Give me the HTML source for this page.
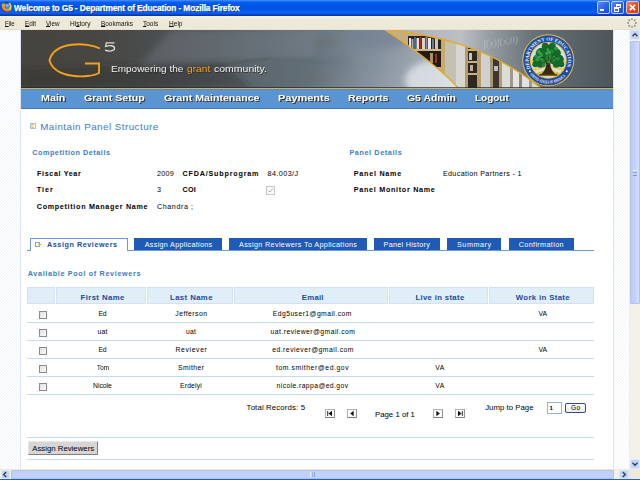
<!DOCTYPE html>
<html><head><meta charset="utf-8">
<style>
html,body{margin:0;padding:0;width:640px;height:480px;overflow:hidden;background:#fff;}
body{position:relative;font-family:"Liberation Sans", sans-serif;}
.a{position:absolute;}
.t{position:absolute;white-space:pre;line-height:1;font-family:"Liberation Sans", sans-serif;}
.t u{text-underline-offset:0px;text-decoration-thickness:1px;}
#title{left:0;top:0;width:640px;height:16px;background:linear-gradient(#4a92fa 0px,#1a6cf2 1.5px,#0058ec 3px,#0054e6 9px,#0a62f2 12px,#0a58e4 14px,#0234b0 15px,#0a3ab8 16px);}
#menu{left:0;top:16px;width:640px;height:14px;background:linear-gradient(#f4f2ea 0px,#ece9d8 4px,#ece9d8 12px,#f0eee4 14px);}
#view{left:0;top:30px;width:629px;height:439px;background-color:#fff;
 background-image:repeating-linear-gradient(-45deg,#fff 0px,#fff 1.2px,#eef3f6 1.5px,#eef3f6 1.8px,#fff 2.12px);}
#page{left:20px;top:30px;width:594px;height:439px;background:#fff;border-left:1px solid #dfe4f6;border-right:1px solid #dfe4f6;box-sizing:border-box;}
#vsb{left:629px;top:30px;width:11px;height:439px;background:#f3f1ea;border-left:1px solid #f0ece0;box-sizing:border-box;}
#hsb{left:0;top:469px;width:629px;height:10px;background:#f3f1ea;border-top:1px solid #ebe8dc;box-sizing:border-box;}
#corner{left:629px;top:469px;width:11px;height:10px;background:#ece9d8;}
#bottomline{left:0;top:479px;width:640px;height:1px;background:#1a60d8;}
.sbbtn{position:absolute;background:#c4d3f8;border:1px solid #e0e8ff;box-sizing:border-box;border-radius:1px;}
.thumb{position:absolute;background:#c2d1fa;border:1px solid #b0c2f4;box-sizing:border-box;border-radius:1px;}
#nav{left:21px;top:89px;width:592px;height:20px;background:#5a94d2;border-top:1px solid #4a88d8;border-bottom:1px solid #3e7cc8;box-sizing:border-box;}
.tab{position:absolute;top:238px;height:12px;background:#1f5ab4;}
.hline{position:absolute;height:1px;background:#c4dbf2;}
.hdr{position:absolute;top:287px;height:17px;background:#e0eef8;border:1px solid #d6e0f4;box-sizing:border-box;}
.cb{position:absolute;width:8px;height:8px;border:1px solid #8a8a8a;background:linear-gradient(135deg,#e0e0e0,#fafafa);box-sizing:border-box;}
.pgb{position:absolute;top:409px;width:10px;height:9px;border:1px solid #b0b0b0;border-right-color:#909090;border-bottom-color:#808080;background:#fcfcfc;box-sizing:border-box;}
</style></head>
<body>
<div id="title" class="a"></div>
<!-- firefox icon -->
<svg class="a" style="left:0;top:0" width="14" height="14" viewBox="0 0 14 14">
 <circle cx="6.4" cy="7" r="4.9" fill="#1a3a8a"/>
 <circle cx="7" cy="6.2" r="2.9" fill="#3a86dc"/>
 <circle cx="7.4" cy="5.6" r="1.2" fill="#8ac8f0"/>
 <path d="M1.7 4.2 C1.3 8.5 4 11.8 7.6 11.4 C10.6 11.1 11.8 8.2 11.2 5.5 C10.8 3.8 9.8 3 8.6 3 C10.2 5 9.8 8.6 7.2 8.9 C5.2 9.1 4.3 7.5 4.6 6 L5.8 5 L4.2 3Z" fill="#f29a22"/>
 <path d="M9 3.2 C11.2 4.3 11.7 8 9.6 10.2" stroke="#f8d048" stroke-width="1.4" fill="none"/>
 <path d="M2.2 8.3 C3.2 10.6 5.8 11.8 9 11.1" stroke="#e03a12" stroke-width="1" fill="none"/>
</svg>
<div id="menu" class="a"></div>
<div class="a" style="left:0;top:29px;width:640px;height:1px;background:#e4e0cc"></div>
<div id="view" class="a"></div>
<div id="page" class="a"></div>

<!-- banner -->
<svg class="a" style="left:21px;top:30px" width="592" height="58" viewBox="0 0 592 58">
 <defs>
  <linearGradient id="bg1" x1="0" y1="0" x2="592" y2="0" gradientUnits="userSpaceOnUse">
   <stop offset="0" stop-color="#45443e"/>
   <stop offset="0.12" stop-color="#474640"/>
   <stop offset="0.22" stop-color="#4a4d4e"/>
   <stop offset="0.32" stop-color="#535a5e"/>
   <stop offset="0.42" stop-color="#5e6a72"/>
   <stop offset="0.52" stop-color="#6c7a86"/>
   <stop offset="0.62" stop-color="#7a8896"/>
  </linearGradient>
  <linearGradient id="sky" x1="310" y1="0" x2="440" y2="58" gradientUnits="userSpaceOnUse">
   <stop offset="0" stop-color="#7e8a94" stop-opacity="0"/>
   <stop offset="0.4" stop-color="#8894a0" stop-opacity="0.9"/>
   <stop offset="0.75" stop-color="#aab2ba" stop-opacity="1"/>
   <stop offset="1" stop-color="#ccd0d4"/>
  </linearGradient>
  <linearGradient id="streak" x1="0" y1="0" x2="1" y2="0">
   <stop offset="0" stop-color="#fff" stop-opacity="0"/>
   <stop offset="0.5" stop-color="#fff" stop-opacity="0.035"/>
   <stop offset="1" stop-color="#fff" stop-opacity="0"/>
  </linearGradient>
  <linearGradient id="right" x1="380" y1="0" x2="592" y2="0" gradientUnits="userSpaceOnUse">
   <stop offset="0" stop-color="#a8b0b8"/>
   <stop offset="0.28" stop-color="#bcc0c4"/>
   <stop offset="0.45" stop-color="#8e969c"/>
   <stop offset="0.62" stop-color="#687276"/>
   <stop offset="1" stop-color="#4c565a"/>
  </linearGradient>
  <clipPath id="lib"><path d="M364 0 C384 12.5 419.3 38.2 437.3 58 L520 58 C470 18 420 6 369 0Z"/></clipPath>
 </defs>
 <rect width="592" height="58" fill="url(#bg1)"/>
<filter id="blur3" x="-20%" y="-50%" width="140%" height="200%"><feGaussianBlur stdDeviation="3"/></filter>
 <filter id="blur1" x="-20%" y="-50%" width="140%" height="200%"><feGaussianBlur stdDeviation="1"/></filter>
 <g filter="url(#blur3)">
  <path d="M150 0 L300 0 L290 26 L120 34Z" fill="#7a848c" opacity="0.35"/>
  <path d="M0 40 L200 32 L230 58 L0 58Z" fill="#2e2e2a" opacity="0.35"/>
  <path d="M230 30 L330 24 L340 58 L240 58Z" fill="#58626a" opacity="0.3"/>
  <ellipse cx="305" cy="12" rx="14" ry="4" fill="#6e6050" opacity="0.35"/>
  <ellipse cx="300" cy="48" rx="16" ry="3" fill="#6e6050" opacity="0.3"/>
 </g>
 <path d="M100 48 L250 28" stroke="#363838" stroke-width="1.5" opacity="0.35" filter="url(#blur1)"/>
 <path d="M250 28 L360 38" stroke="#4a5258" stroke-width="1.2" opacity="0.3" filter="url(#blur1)"/>

 <path d="M240 0 L364 0 C384 12.5 419.3 38.2 437.3 58 L240 58Z" fill="url(#sky)"/>
 <clipPath id="skyclip"><path d="M240 0 L364 0 C384 12.5 419.3 38.2 437.3 58 L240 58Z"/></clipPath>
 <g clip-path="url(#skyclip)"><ellipse cx="418" cy="50" rx="34" ry="20" fill="#e4e8ec" opacity="0.75" filter="url(#blur3)"/><ellipse cx="360" cy="8" rx="30" ry="10" fill="#6c7c90" opacity="0.4" filter="url(#blur3)"/></g>
 <path d="M369 0 L592 0 L592 58 L520 58 C470 18 420 6 369 0Z" fill="url(#right)"/>
 <g clip-path="url(#lib)">
  <rect x="360" y="0" width="170" height="58" fill="#c4ae82"/>
  <rect x="387" y="6" width="34" height="13" fill="#2a241e"/>
  <rect x="388" y="8" width="2" height="11" fill="#e8e4dc"/>
  <rect x="390.5" y="9" width="2" height="10" fill="#b8a890"/>
  <rect x="393" y="7" width="2" height="12" fill="#406a9a"/>
  <rect x="395.5" y="8" width="2.5" height="11" fill="#e0e0e0"/>
  <rect x="398.5" y="7" width="2" height="12" fill="#b02a1a"/>
  <rect x="401" y="8" width="3" height="11" fill="#d8d4cc"/>
  <rect x="404.5" y="7" width="2" height="12" fill="#8a8a8a"/>
  <rect x="407" y="8" width="3" height="11" fill="#e8e8e8"/>
  <rect x="411" y="9" width="2" height="10" fill="#6a7a90"/>
  <rect x="414" y="8" width="3" height="11" fill="#c8c8c8"/>
  <rect x="387" y="19" width="34" height="2" fill="#d0b888"/>
  <rect x="392" y="21" width="29" height="16" fill="#221c16"/>
  <rect x="409" y="23" width="3" height="10" fill="#a89060"/>
  <rect x="414" y="24" width="2" height="9" fill="#a03020"/>
  <rect x="420" y="0" width="4" height="58" fill="#c8aa70"/>
  <rect x="424" y="0" width="11" height="58" fill="#c4c0b2"/>
  <rect x="435" y="0" width="9" height="58" fill="#d8d6d0"/>
  <rect x="444" y="8" width="3" height="50" fill="#b89a68"/>
  <rect x="447" y="8" width="9" height="50" fill="#2e2820"/>
  <rect x="448" y="12" width="2" height="6" fill="#d0ccc0"/>
  <rect x="451" y="12" width="3" height="6" fill="#9aa8b8"/>
  <rect x="447" y="19" width="9" height="2" fill="#c8b088"/>
  <rect x="448" y="23" width="3" height="7" fill="#c8c4b8"/>
  <rect x="447" y="31" width="9" height="2" fill="#c8b088"/>
  <rect x="449" y="35" width="3" height="6" fill="#b8b0a0"/>
  <rect x="447" y="43" width="9" height="2" fill="#c8b088"/>
  <rect x="456" y="10" width="4" height="48" fill="#b89c6c"/>
  <rect x="460" y="12" width="9" height="46" fill="#d0d0cc"/>
  <rect x="469" y="16" width="3" height="42" fill="#a8987a"/>
  <rect x="472" y="18" width="6" height="40" fill="#3e362a"/>
  <rect x="473" y="24" width="4" height="5" fill="#c0bcb0"/>
  <rect x="473" y="36" width="4" height="5" fill="#b8c0c8"/>
  <rect x="478" y="18" width="3" height="40" fill="#b09c70"/>
  <rect x="481" y="20" width="8" height="38" fill="#dcdcd8"/>
  <rect x="489" y="24" width="3" height="34" fill="#a09a8e"/>
  <rect x="492" y="26" width="6" height="32" fill="#e4e4e2"/>
  <rect x="498" y="28" width="3" height="30" fill="#8a8680"/>
  <rect x="501" y="30" width="7" height="28" fill="#e0e2e4"/>
  <rect x="508" y="32" width="3" height="26" fill="#9a9a98"/>
  <rect x="511" y="34" width="10" height="24" fill="#d8dadc"/>
 </g>
 <text x="462" y="15" font-family="Liberation Serif" font-style="italic" font-size="10" fill="#d0d4d8" opacity="0.45" transform="rotate(-8 480 12)">f(x)f(x,0)</text>
 <path d="M364 0 C384 12.5 419.3 38.2 437.3 58" stroke="#e8aa20" stroke-width="1.3" fill="none"/>
 <path d="M369 0 C420 6 470 18 520 58" stroke="#e8aa20" stroke-width="1.3" fill="none"/>
 <path d="M79 18.5 C66 12 33 11 28.5 30.4 C34 49 68 48.5 78 43 L78 33.5 L64 33.5" stroke="#f2a21e" stroke-width="1.9" fill="none"/>
 <path d="M93.5 12.8 L85.3 12.8 L84.6 16.4 C88 15.2 93.6 15.2 93.6 18.3 C93.6 21.4 87.5 21.6 84 20.2" stroke="#d8dadc" stroke-width="1.3" fill="none"/>
 <g transform="translate(527.3,30.3)">
  <circle r="26" fill="#e6be3a"/>
  <circle r="25" fill="#1e4ca4"/>
  <defs>
   <path id="arcT" d="M-17.76 8.28 A19.6 19.6 0 1 1 17.76 8.28"/>
   <path id="arcB" d="M-18.36 14.34 A23.3 23.3 0 0 0 18.36 14.34"/>
  </defs>
  <text font-family="Liberation Serif" font-weight="bold" font-size="5" fill="#f4f4f8"><textPath href="#arcT" textLength="76.3" lengthAdjust="spacingAndGlyphs">DEPARTMENT OF EDUCATION</textPath></text>
  <text font-family="Liberation Serif" font-weight="bold" font-size="4.3" fill="#f0f0f4"><textPath href="#arcB" textLength="40.2" lengthAdjust="spacingAndGlyphs">UNITED STATES OF AMERICA</textPath></text>
  <circle cx="-18.43" cy="11.07" r="1" fill="#f4f4f8"/>
  <circle cx="18.43" cy="11.07" r="1" fill="#f4f4f8"/>
  <circle r="18.4" fill="#e6be3a"/>
  <circle r="17.4" fill="#d8e0ec"/>
  <path d="M0 6 L-17 -1 L-17 2.5Z M0 6 L17 -1 L17 2.5Z M0 6 L-16 8 L-15 11Z M0 6 L16 8 L15 11Z M0 6 L-14 -8 L-12 -10Z M0 6 L14 -8 L12 -10Z M0 6 L-10 14 L-7 15Z M0 6 L10 14 L7 15Z" fill="#ecc84a"/>
  <path d="M-12 13 C-6 10 6 10 12 13 L9 16 L-9 16Z" fill="#e0b834"/>
  <path d="M-2 0 C-1.5 6 -3 10 -7 14 L7 14 C3 10 1.5 6 2 0Z" fill="#3a2810"/>
  <path d="M-1 4 L-7 -2 M1 3 L6 -3 M0 0 L0 -8" stroke="#3a2810" stroke-width="1"/>
  <path d="M-9 14.6 L9 14.6" stroke="#2a1c08" stroke-width="1.3"/>
  <circle cx="0" cy="-9" r="6.5" fill="#156a2a"/><circle cx="-7" cy="-7" r="5.5" fill="#156a2a"/><circle cx="7" cy="-7" r="5.5" fill="#156a2a"/><circle cx="-11" cy="-1" r="4.5" fill="#156a2a"/><circle cx="11" cy="-1" r="4.5" fill="#156a2a"/><circle cx="-5" cy="-1" r="5" fill="#156a2a"/><circle cx="5" cy="-1" r="5" fill="#156a2a"/><circle cx="0" cy="-3" r="5" fill="#156a2a"/><circle cx="-13" cy="4" r="3" fill="#156a2a"/><circle cx="13" cy="4" r="3" fill="#156a2a"/><circle cx="-8" cy="4" r="3.5" fill="#156a2a"/><circle cx="8" cy="4" r="3.5" fill="#156a2a"/><circle cx="-3" cy="-14" r="3.5" fill="#156a2a"/><circle cx="4" cy="-14" r="3.5" fill="#156a2a"/><circle cx="0.5" cy="1.4" r="1.6" fill="#35a84e"/><circle cx="-7.2" cy="-3.1" r="1.8" fill="#23883a"/><circle cx="-0.2" cy="-1.7" r="2.2" fill="#23883a"/><circle cx="-6.6" cy="-5.4" r="1.6" fill="#2a9a44"/><circle cx="0.2" cy="-2.5" r="2.1" fill="#23883a"/><circle cx="-0.5" cy="-10.7" r="1.3" fill="#35a84e"/><circle cx="9.4" cy="-1.9" r="2.0" fill="#23883a"/><circle cx="-8.9" cy="-2.8" r="2.1" fill="#35a84e"/><circle cx="1.3" cy="-8.1" r="1.9" fill="#35a84e"/><circle cx="-11.0" cy="-0.8" r="2.1" fill="#2a9a44"/><circle cx="6.0" cy="-2.9" r="1.5" fill="#35a84e"/><circle cx="-7.2" cy="-1.6" r="1.5" fill="#35a84e"/><circle cx="3.6" cy="-9.0" r="1.7" fill="#23883a"/><circle cx="-9.8" cy="-8.6" r="1.9" fill="#2a9a44"/><circle cx="7.7" cy="-11.8" r="1.9" fill="#2a9a44"/><circle cx="-1.3" cy="-7.1" r="1.7" fill="#35a84e"/><circle cx="-8.1" cy="-7.0" r="1.4" fill="#35a84e"/><circle cx="-0.2" cy="-2.8" r="1.7" fill="#35a84e"/><circle cx="1.1" cy="-4.1" r="2.0" fill="#23883a"/><circle cx="0.2" cy="-4.1" r="1.6" fill="#23883a"/><circle cx="0.4" cy="-4.3" r="1.8" fill="#2a9a44"/><circle cx="-5.3" cy="0.1" r="1.8" fill="#23883a"/><circle cx="-12.5" cy="-4.3" r="1.5" fill="#2a9a44"/><circle cx="5.2" cy="-0.6" r="2.1" fill="#23883a"/><circle cx="-0.9" cy="-1.5" r="1.9" fill="#23883a"/><circle cx="-4.7" cy="4.8" r="2.1" fill="#23883a"/>
  <path d="M-1.5 2 L-5 -3 M1.5 2 L5 -2 M0 1 L0 -6 M-5 -3 L-9 -2 M5 -2 L9 -4" stroke="#3a2810" stroke-width="0.8" fill="none"/>
 </g>
 <rect x="0" y="57" width="592" height="1" fill="#26261f" opacity="0.7"/>
</svg>
<div class="a" style="left:21px;top:88px;width:592px;height:1px;background:#dcb040"></div>
<div id="nav" class="a"></div>

<!-- icon near heading -->
<svg class="a" style="left:30px;top:123px" width="6" height="6"><rect x="0.5" y="0.5" width="5" height="5" fill="#fff" stroke="#a4c4ee" stroke-width="1"/><path d="M4 1.6 L2 1.6 L2 4.4 L4 4.4" stroke="#f4c828" stroke-width="1.3" fill="none"/><rect x="2.6" y="2.4" width="1.4" height="1.4" fill="#f0f4f8"/></svg>
<!-- COI checkbox disabled -->
<div class="a" style="left:266px;top:186px;width:9px;height:9px;border:1px solid #c8c8c8;background:#fafafa;box-sizing:border-box"></div>
<svg class="a" style="left:267px;top:187px" width="7" height="7"><path d="M1.5 3.5 L3 5 L6 1.5" stroke="#b0b0b0" stroke-width="1" fill="none"/></svg>

<!-- tabs -->
<div class="a" style="left:27px;top:250px;width:567px;height:1px;background:#6a9ad8"></div>
<div class="a" style="left:30px;top:238px;width:98px;height:13px;background:#fff;border:1px solid #6a9ad8;border-bottom:none;box-sizing:border-box"></div>
<svg class="a" style="left:35px;top:242px" width="7" height="6"><rect x="0.5" y="0.5" width="4" height="4" fill="#fff" stroke="#80a8e0"/><path d="M3 2.5 L6.5 2.5" stroke="#f0b020" stroke-width="1.2"/></svg>
<div class="tab" style="left:134px;width:88px"></div>
<div class="tab" style="left:229px;width:138px"></div>
<div class="tab" style="left:374px;width:66px"></div>
<div class="tab" style="left:447px;width:54px"></div>
<div class="tab" style="left:509px;width:65px"></div>

<!-- table header -->
<div class="hdr" style="left:27px;width:28px"></div>
<div class="hdr" style="left:56px;width:90px"></div>
<div class="hdr" style="left:147px;width:86px"></div>
<div class="hdr" style="left:234px;width:154px"></div>
<div class="hdr" style="left:389px;width:99px"></div>
<div class="hdr" style="left:489px;width:105px"></div>
<div class="hline" style="left:27px;top:322px;width:567px"></div>
<div class="hline" style="left:27px;top:340px;width:567px"></div>
<div class="hline" style="left:27px;top:358px;width:567px"></div>
<div class="hline" style="left:27px;top:376px;width:567px"></div>
<div class="hline" style="left:27px;top:394px;width:567px"></div>
<div class="cb" style="left:39px;top:311px"></div>
<div class="cb" style="left:39px;top:329px"></div>
<div class="cb" style="left:39px;top:347px"></div>
<div class="cb" style="left:39px;top:365px"></div>
<div class="cb" style="left:39px;top:383px"></div>

<!-- pager -->
<div class="pgb" style="left:325px"></div>
<div class="pgb" style="left:347px"></div>
<div class="pgb" style="left:433px"></div>
<div class="pgb" style="left:455px"></div>
<svg class="a" style="left:325px;top:409px" width="10" height="9"><rect x="2" y="2" width="1.2" height="5" fill="#555"/><path d="M7 1.8 L3.4 4.5 L7 7.2Z" fill="#111"/></svg>
<svg class="a" style="left:347px;top:409px" width="10" height="9"><path d="M6.6 1.8 L3.2 4.5 L6.6 7.2Z" fill="#111"/></svg>
<svg class="a" style="left:433px;top:409px" width="10" height="9"><path d="M3.4 1.8 L6.8 4.5 L3.4 7.2Z" fill="#111"/></svg>
<svg class="a" style="left:455px;top:409px" width="10" height="9"><rect x="6.8" y="2" width="1.2" height="5" fill="#555"/><path d="M3 1.8 L6.6 4.5 L3 7.2Z" fill="#111"/></svg>
<div class="a" style="left:547px;top:402px;width:15px;height:12px;border:1px solid #98b2d4;background:#fff;box-sizing:border-box"></div>
<div class="t" style="left:549.5px;top:404.5px;font-size:6px;font-weight:bold">1</div>
<div class="a" style="left:565px;top:403px;width:21px;height:10px;border:1px solid #2a4e88;border-radius:2px;background:linear-gradient(#fdfdfb,#ecebe4);box-sizing:border-box"></div>
<div class="t" style="left:571px;top:405px;font-size:6.6px;letter-spacing:0.4px">Go</div>

<div class="hline" style="left:27px;top:437px;width:567px"></div>
<div class="a" style="left:28px;top:441px;width:70px;height:14px;background:#d6d6d6;border:1px solid #e8e8e8;border-right-color:#808080;border-bottom-color:#808080;box-sizing:border-box"></div>
<div class="hline" style="left:27px;top:459px;width:567px"></div>

<!-- scrollbars -->
<div id="vsb" class="a"></div>
<div class="sbbtn" style="left:630px;top:30px;width:10px;height:10px"></div>
<svg class="a" style="left:630px;top:30px" width="10" height="10"><path d="M2.5 6.2 L5 3.7 L7.5 6.2" stroke="#30405a" stroke-width="1.4" fill="none"/></svg>
<div class="thumb" style="left:630px;top:41px;width:10px;height:263px;background:linear-gradient(90deg,#bccbf8,#c6d4fa 60%,#d4e0fc)"></div>
<div class="a" style="left:633px;top:170px;width:4px;height:1px;background:#e8f0ff"></div>
<div class="a" style="left:633px;top:172px;width:4px;height:1px;background:#8aa4e0"></div>
<div class="a" style="left:633px;top:175px;width:4px;height:1px;background:#7a94d0"></div>
<div class="sbbtn" style="left:630px;top:459px;width:10px;height:10px"></div>
<svg class="a" style="left:630px;top:459px" width="10" height="10"><path d="M2.5 3.8 L5 6.3 L7.5 3.8" stroke="#30405a" stroke-width="1.4" fill="none"/></svg>
<div id="hsb" class="a"></div>
<div class="sbbtn" style="left:1px;top:470px;width:9px;height:9px"></div>
<svg class="a" style="left:0px;top:470px" width="10" height="9"><path d="M6.2 2 L3.7 4.5 L6.2 7" stroke="#30405a" stroke-width="1.4" fill="none"/></svg>
<div class="thumb" style="left:11px;top:470px;width:603px;height:9px"></div>
<div class="a" style="left:310px;top:472px;width:1px;height:5px;background:#e8f0ff"></div>
<div class="a" style="left:312px;top:472px;width:1px;height:5px;background:#9ab0e8"></div>
<div class="a" style="left:314px;top:472px;width:1px;height:5px;background:#8aa4e0"></div>
<div class="sbbtn" style="left:619px;top:470px;width:10px;height:9px"></div>
<svg class="a" style="left:619px;top:470px" width="10" height="9"><path d="M3.8 2 L6.3 4.5 L3.8 7" stroke="#30405a" stroke-width="1.4" fill="none"/></svg>
<div id="corner" class="a"></div>
<div id="bottomline" class="a"></div>

<!-- window buttons -->
<div class="a" style="left:597px;top:1px;width:13px;height:13px;border:1px solid #b8ccf8;border-radius:2px;background:linear-gradient(135deg,#5a8af8,#2a5ee8 60%,#1a4ed8);box-sizing:border-box"></div>
<div class="a" style="left:600px;top:9px;width:4px;height:2px;background:#fff"></div>
<div class="a" style="left:611px;top:1px;width:13px;height:13px;border:1px solid #b8ccf8;border-radius:2px;background:linear-gradient(135deg,#5a8af8,#2a5ee8 60%,#1a4ed8);box-sizing:border-box"></div>
<div class="a" style="left:616px;top:4px;width:5px;height:4px;border:1px solid #fff;border-top-width:2px;box-sizing:border-box"></div>
<div class="a" style="left:614px;top:7px;width:5px;height:5px;border:1px solid #fff;border-top-width:2px;background:#3a6af0;box-sizing:border-box"></div>
<div class="a" style="left:626px;top:1px;width:13px;height:13px;border:1px solid #f0c0b0;border-radius:2px;background:linear-gradient(135deg,#f08060,#e0502a 50%,#c83a1a);box-sizing:border-box"></div>
<svg class="a" style="left:626px;top:1px" width="13" height="13"><path d="M3.8 3.8 L9.2 9.2 M9.2 3.8 L3.8 9.2" stroke="#fff" stroke-width="1.7"/></svg>
<!-- throbber -->
<svg class="a" style="left:626px;top:17px" width="12" height="12"><circle cx="9.90" cy="6.00" r="0.95" fill="#8c8c8c"/><circle cx="8.76" cy="8.76" r="0.95" fill="#8c8c8c"/><circle cx="6.00" cy="9.90" r="0.95" fill="#8c8c8c"/><circle cx="3.24" cy="8.76" r="0.95" fill="#8c8c8c"/><circle cx="2.10" cy="6.00" r="0.95" fill="#8c8c8c"/><circle cx="3.24" cy="3.24" r="0.95" fill="#8c8c8c"/><circle cx="6.00" cy="2.10" r="0.95" fill="#8c8c8c"/><circle cx="8.76" cy="3.24" r="0.95" fill="#8c8c8c"/></svg>

<div class='t' style='left:14.00px;top:4px;font-size:8.4px;font-weight:bold;color:#fff;letter-spacing:-0.13px;text-shadow:1px 1px 0 #0a2a8a;-webkit-text-stroke:0.25px #fff;'>Welcome to G5 - Department of Education - Mozilla Firefox</div>
<div class='t' style='left:4.70px;top:20px;font-size:8.0px;font-weight:normal;color:#111;transform:scaleX(0.7538);transform-origin:0 0;'><u>F</u>ile</div>
<div class='t' style='left:24.80px;top:20px;font-size:8.0px;font-weight:normal;color:#111;transform:scaleX(0.8000);transform-origin:0 0;'><u>E</u>dit</div>
<div class='t' style='left:45.90px;top:20px;font-size:8.0px;font-weight:normal;color:#111;transform:scaleX(0.7833);transform-origin:0 0;'><u>V</u>iew</div>
<div class='t' style='left:70.00px;top:20px;font-size:8.0px;font-weight:normal;color:#111;transform:scaleX(0.8200);transform-origin:0 0;'>Hi<u>s</u>tory</div>
<div class='t' style='left:100.50px;top:20px;font-size:8.0px;font-weight:normal;color:#111;transform:scaleX(0.8000);transform-origin:0 0;'><u>B</u>ookmarks</div>
<div class='t' style='left:142.80px;top:20px;font-size:8.0px;font-weight:normal;color:#111;transform:scaleX(0.8105);transform-origin:0 0;'><u>T</u>ools</div>
<div class='t' style='left:168.50px;top:20px;font-size:8.0px;font-weight:normal;color:#111;transform:scaleX(0.8187);transform-origin:0 0;'><u>H</u>elp</div>
<div class='t' style='left:41.00px;top:93px;font-size:9.4px;font-weight:bold;color:#fff;transform:scaleX(1.1429);transform-origin:0 0;text-shadow:1px 1px 0 #3a3020;'>Main</div>
<div class='t' style='left:84.00px;top:93px;font-size:9.4px;font-weight:bold;color:#fff;transform:scaleX(1.1296);transform-origin:0 0;text-shadow:1px 1px 0 #3a3020;'>Grant Setup</div>
<div class='t' style='left:164.00px;top:93px;font-size:9.4px;font-weight:bold;color:#fff;transform:scaleX(1.1310);transform-origin:0 0;text-shadow:1px 1px 0 #3a3020;'>Grant Maintenance</div>
<div class='t' style='left:278.00px;top:93px;font-size:9.4px;font-weight:bold;color:#fff;transform:scaleX(1.1682);transform-origin:0 0;text-shadow:1px 1px 0 #3a3020;'>Payments</div>
<div class='t' style='left:348.00px;top:93px;font-size:9.4px;font-weight:bold;color:#fff;transform:scaleX(1.1429);transform-origin:0 0;text-shadow:1px 1px 0 #3a3020;'>Reports</div>
<div class='t' style='left:407.00px;top:93px;font-size:9.4px;font-weight:bold;color:#fff;transform:scaleX(1.1136);transform-origin:0 0;text-shadow:1px 1px 0 #3a3020;'>G5 Admin</div>
<div class='t' style='left:475.00px;top:93px;font-size:9.4px;font-weight:bold;color:#fff;transform:scaleX(1.0625);transform-origin:0 0;text-shadow:1px 1px 0 #3a3020;'>Logout</div>
<div class='t' style='left:110.80px;top:64px;font-size:9.4px;font-weight:normal;color:#f2f2f2;transform:scaleX(1.0676);transform-origin:0 0;text-shadow:0.5px 0.5px 0 #2a2a26;'>Empowering the</div>
<div class='t' style='left:187.30px;top:64px;font-size:9.4px;font-weight:normal;color:#f5a21a;transform:scaleX(1.0864);transform-origin:0 0;text-shadow:0.5px 0.5px 0 #2a2a26;'>grant</div>
<div class='t' style='left:214.40px;top:64px;font-size:9.4px;font-weight:normal;color:#f2f2f2;transform:scaleX(1.1191);transform-origin:0 0;text-shadow:0.5px 0.5px 0 #2a2a26;'>community.</div>
<div class='t' style='left:40.20px;top:122px;font-size:9.8px;font-weight:normal;color:#3a7cc8;letter-spacing:0.47px;'>Maintain Panel Structure</div>
<div class='t' style='left:32.20px;top:149px;font-size:7.2px;font-weight:bold;color:#3a7cc8;letter-spacing:0.572px;'>Competition Details</div>
<div class='t' style='left:349.40px;top:149px;font-size:7.2px;font-weight:bold;color:#3a7cc8;letter-spacing:0.633px;'>Panel Details</div>
<div class='t' style='left:37.00px;top:170px;font-size:7.2px;font-weight:bold;color:#000;letter-spacing:0.63px;'>Fiscal Year</div>
<div class='t' style='left:36.70px;top:186px;font-size:7.2px;font-weight:bold;color:#000;letter-spacing:1.017px;'>Tier</div>
<div class='t' style='left:36.75px;top:203px;font-size:7.2px;font-weight:bold;color:#000;letter-spacing:0.685px;'>Competition Manager Name</div>
<div class='t' style='left:156.90px;top:170px;font-size:7.2px;font-weight:normal;color:#000;letter-spacing:0.3px;'>2009</div>
<div class='t' style='left:156.90px;top:186px;font-size:7.2px;font-weight:normal;color:#000;letter-spacing:0.0px;'>3</div>
<div class='t' style='left:157.00px;top:203px;font-size:7.2px;font-weight:normal;color:#000;letter-spacing:0.562px;'>Chandra ;</div>
<div class='t' style='left:182.50px;top:170px;font-size:7.2px;font-weight:bold;color:#000;letter-spacing:0.804px;'>CFDA/Subprogram</div>
<div class='t' style='left:182.50px;top:186px;font-size:7.2px;font-weight:bold;color:#000;letter-spacing:0.25px;'>COI</div>
<div class='t' style='left:267.50px;top:170px;font-size:7.2px;font-weight:normal;color:#000;letter-spacing:0.429px;'>84.003/J</div>
<div class='t' style='left:353.80px;top:170px;font-size:7.2px;font-weight:bold;color:#000;letter-spacing:0.744px;'>Panel Name</div>
<div class='t' style='left:442.90px;top:170px;font-size:7.2px;font-weight:normal;color:#000;letter-spacing:0.338px;'>Education Partners - 1</div>
<div class='t' style='left:353.80px;top:186px;font-size:7.2px;font-weight:bold;color:#000;letter-spacing:0.703px;'>Panel Monitor Name</div>
<div class='t' style='left:47.00px;top:241px;font-size:7.2px;font-weight:bold;color:#1a4b9b;letter-spacing:0.567px;'>Assign Reviewers</div>
<div class='t' style='left:144.75px;top:241px;font-size:7.2px;font-weight:normal;color:#fff;letter-spacing:0.303px;'>Assign Applications</div>
<div class='t' style='left:239.00px;top:241px;font-size:7.2px;font-weight:normal;color:#fff;letter-spacing:0.355px;'>Assign Reviewers To Applications</div>
<div class='t' style='left:383.60px;top:241px;font-size:7.2px;font-weight:normal;color:#fff;letter-spacing:0.283px;'>Panel History</div>
<div class='t' style='left:457.00px;top:241px;font-size:7.2px;font-weight:normal;color:#fff;letter-spacing:0.542px;'>Summary</div>
<div class='t' style='left:518.75px;top:241px;font-size:7.2px;font-weight:normal;color:#fff;letter-spacing:0.364px;'>Confirmation</div>
<div class='t' style='left:27.75px;top:270px;font-size:7.2px;font-weight:bold;color:#3a7cc8;letter-spacing:0.675px;'>Available Pool of Reviewers</div>
<div class='t' style='left:80.50px;top:294px;font-size:7.8px;font-weight:bold;color:#1a4b9b;letter-spacing:0.389px;'>First Name</div>
<div class='t' style='left:170.00px;top:294px;font-size:7.8px;font-weight:bold;color:#1a4b9b;letter-spacing:0.387px;'>Last Name</div>
<div class='t' style='left:301.80px;top:294px;font-size:7.8px;font-weight:bold;color:#1a4b9b;letter-spacing:0.225px;'>Email</div>
<div class='t' style='left:415.40px;top:294px;font-size:7.8px;font-weight:bold;color:#1a4b9b;letter-spacing:0.317px;'>Live in state</div>
<div class='t' style='left:515.70px;top:294px;font-size:7.8px;font-weight:bold;color:#1a4b9b;letter-spacing:0.358px;'>Work in State</div>
<div class='t' style='left:98.50px;top:311px;font-size:6.8px;font-weight:normal;color:#000;letter-spacing:-0.3px;'>Ed</div>
<div class='t' style='left:175.30px;top:311px;font-size:6.8px;font-weight:normal;color:#000;letter-spacing:0.475px;'>Jefferson</div>
<div class='t' style='left:272.80px;top:311px;font-size:6.8px;font-weight:normal;color:#000;letter-spacing:0.433px;'>Edg5user1@gmail.com</div>
<div class='t' style='left:538.40px;top:311px;font-size:6.8px;font-weight:normal;color:#000;letter-spacing:0.1px;'>VA</div>
<div class='t' style='left:97.50px;top:329px;font-size:6.8px;font-weight:normal;color:#000;letter-spacing:0.25px;'>uat</div>
<div class='t' style='left:186.00px;top:329px;font-size:6.8px;font-weight:normal;color:#000;letter-spacing:0.25px;'>uat</div>
<div class='t' style='left:270.60px;top:329px;font-size:6.8px;font-weight:normal;color:#000;letter-spacing:0.448px;'>uat.reviewer@gmail.com</div>
<div class='t' style='left:98.50px;top:347px;font-size:6.8px;font-weight:normal;color:#000;letter-spacing:-0.3px;'>Ed</div>
<div class='t' style='left:175.50px;top:347px;font-size:6.8px;font-weight:normal;color:#000;letter-spacing:0.643px;'>Reviever</div>
<div class='t' style='left:272.20px;top:347px;font-size:6.8px;font-weight:normal;color:#000;letter-spacing:0.49px;'>ed.reviever@gmail.com</div>
<div class='t' style='left:538.40px;top:347px;font-size:6.8px;font-weight:normal;color:#000;letter-spacing:0.1px;'>VA</div>
<div class='t' style='left:96.50px;top:365px;font-size:6.8px;font-weight:normal;color:#000;transform:scaleX(0.9231);transform-origin:0 0;'>Tom</div>
<div class='t' style='left:178.00px;top:365px;font-size:6.8px;font-weight:normal;color:#000;letter-spacing:0.417px;'>Smither</div>
<div class='t' style='left:276.00px;top:365px;font-size:6.8px;font-weight:normal;color:#000;letter-spacing:0.574px;'>tom.smither@ed.gov</div>
<div class='t' style='left:435.30px;top:365px;font-size:6.8px;font-weight:normal;color:#000;letter-spacing:0.4px;'>VA</div>
<div class='t' style='left:93.00px;top:383px;font-size:6.8px;font-weight:normal;color:#000;letter-spacing:0.0px;'>Nicole</div>
<div class='t' style='left:180.00px;top:383px;font-size:6.8px;font-weight:normal;color:#000;letter-spacing:0.167px;'>Erdelyi</div>
<div class='t' style='left:276.60px;top:383px;font-size:6.8px;font-weight:normal;color:#000;letter-spacing:0.397px;'>nicole.rappa@ed.gov</div>
<div class='t' style='left:435.30px;top:383px;font-size:6.8px;font-weight:normal;color:#000;letter-spacing:0.4px;'>VA</div>
<div class='t' style='left:246.60px;top:404px;font-size:7.8px;font-weight:normal;color:#000;letter-spacing:0.14px;'>Total Records: 5</div>
<div class='t' style='left:375.00px;top:411px;font-size:7.8px;font-weight:normal;color:#000;letter-spacing:0.0px;'>Page 1 of 1</div>
<div class='t' style='left:485.20px;top:404px;font-size:7.8px;font-weight:normal;color:#000;letter-spacing:0.018px;'>Jump to Page</div>
<div class='t' style='left:32.20px;top:445px;font-size:7.8px;font-weight:normal;color:#000;letter-spacing:0.0px;'>Assign Reviewers</div>
</body></html>
